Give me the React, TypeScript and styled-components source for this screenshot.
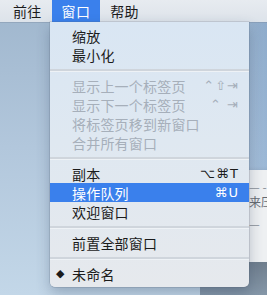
import React from 'react';
import styled, { createGlobalStyle } from 'styled-components';

const GlobalStyle = createGlobalStyle`
  html, body {
    margin: 0;
    padding: 0;
    width: 267px;
    height: 295px;
    overflow: hidden;
  }
  body {
    font-family: "Noto Sans CJK SC", "Noto Sans", sans-serif;
  }
`;

type Item =
  | { kind: 'sep' }
  | { kind: 'item'; label: string; shortcut?: string; disabled?: boolean; active?: boolean; mark?: boolean };

const items: Item[] = [
  { kind: 'item', label: '缩放' },
  { kind: 'item', label: '最小化' },
  { kind: 'sep' },
  { kind: 'item', label: '显示上一个标签页', shortcut: '⌃⇧⇥', disabled: true },
  { kind: 'item', label: '显示下一个标签页', shortcut: '⌃ ⇥', disabled: true },
  { kind: 'item', label: '将标签页移到新窗口', disabled: true },
  { kind: 'item', label: '合并所有窗口', disabled: true },
  { kind: 'sep' },
  { kind: 'item', label: '副本', shortcut: '⌥⌘T' },
  { kind: 'item', label: '操作队列', shortcut: '⌘U', active: true },
  { kind: 'item', label: '欢迎窗口' },
  { kind: 'sep' },
  { kind: 'item', label: '前置全部窗口' },
  { kind: 'sep' },
  { kind: 'item', label: '未命名', mark: true },
];

const App: React.FC = () => {
  return (
    <Desktop>
      <GlobalStyle />
      <MenuBar>
        <BarItem>前往</BarItem>
        <BarItem $open>窗口</BarItem>
        <BarItem>帮助</BarItem>
      </MenuBar>

      <BackWindow>
        <WinLine $dash>— -</WinLine>
        <WinLine $top={3}>来压</WinLine>
        <WinLine $dash $top={10}>—</WinLine>
      </BackWindow>
      <WindowShade />

      <Dropdown>
        {items.map((it, i) =>
          it.kind === 'sep' ? (
            <Separator key={i} />
          ) : (
            <Row key={i} $disabled={it.disabled} $active={it.active}>
              <Mark>{it.mark ? '◆' : ''}</Mark>
              <Label>{it.label}</Label>
              {it.shortcut && <Shortcut>{it.shortcut}</Shortcut>}
            </Row>
          )
        )}
      </Dropdown>
    </Desktop>
  );
};

const Desktop = styled.div`
  position: relative;
  width: 267px;
  height: 295px;
  overflow: hidden;
  background:
    linear-gradient(90deg, rgba(255,255,255,0) 0%, rgba(255,255,255,0) 85%, rgba(80,130,190,0.25) 100%),
    linear-gradient(180deg, #9fb6cd 0%, #b2c7dc 50%, #c3d7e8 100%);
`;

const MenuBar = styled.div`
  display: flex;
  align-items: stretch;
  height: 22px;
  padding-left: 3px;
  background: linear-gradient(180deg, #e7ebf0 0%, #dde3ea 100%);
  box-shadow: 0 1px 0 rgba(120, 135, 155, 0.35);
  position: relative;
  z-index: 2;
`;

const BarItem = styled.div<{ $open?: boolean }>`
  display: flex;
  align-items: center;
  padding: 0 10px;
  font-size: 14px;
  letter-spacing: 0.3px;
  color: ${p => (p.$open ? '#ffffff' : '#1b1b1b')};
  background: ${p => (p.$open ? '#3a80ec' : 'transparent')};
`;

const BackWindow = styled.div`
  position: absolute;
  left: 200px;
  top: 170px;
  width: 90px;
  height: 92px;
  padding-top: 11px;
  box-sizing: border-box;
  background: #eef0f2;
  box-shadow: 0 2px 6px rgba(0, 0, 0, 0.2);
  display: flex;
  flex-direction: column;
  align-items: flex-end;
  font-size: 12px;
  line-height: 12px;
`;

const WinLine = styled.span<{ $dash?: boolean; $top?: number }>`
  width: 41px;
  white-space: nowrap;
  color: ${p => (p.$dash ? '#8a8f96' : '#666b72')};
  margin-top: ${p => p.$top ?? 0}px;
`;

const WindowShade = styled.div`
  position: absolute;
  left: 200px;
  top: 262px;
  width: 90px;
  height: 33px;
  background: linear-gradient(180deg, #6f7e8d 0%, #8597a8 100%);
`;

const Dropdown = styled.div`
  position: absolute;
  left: 50px;
  top: 22px;
  width: 199px;
  padding: 4px 0;
  box-sizing: border-box;
  background: linear-gradient(180deg, #d9e6f3 0%, #dfe8f1 45%, #e6e9ed 100%);
  border-radius: 0 0 5px 5px;
  box-shadow: 0 6px 14px rgba(40, 60, 90, 0.3), 0 0 0 0.5px rgba(90, 100, 115, 0.35);
  z-index: 3;
`;

const Row = styled.div<{ $disabled?: boolean; $active?: boolean }>`
  display: flex;
  align-items: center;
  height: 19px;
  padding: 0 10px 0 5px;
  font-size: 14px;
  color: ${p => (p.$active ? '#ffffff' : p.$disabled ? '#a6afba' : '#1b1b1b')};
  background: ${p => (p.$active ? '#3a80ec' : 'transparent')};
`;

const Mark = styled.span`
  width: 17px;
  font-size: 11px;
  font-family: "DejaVu Sans", sans-serif;
  padding-left: 1px;
  box-sizing: border-box;
`;

const Label = styled.span`
  flex: 1;
  white-space: nowrap;
  letter-spacing: 0.2px;
`;

const Shortcut = styled.span`
  font-family: "DejaVu Sans", "Liberation Sans", sans-serif;
  font-size: 13px;
  letter-spacing: 1px;
  white-space: pre;
`;

const Separator = styled.div`
  height: 12px;
  display: flex;
  align-items: center;
  &::before {
    content: '';
    flex: 1;
    height: 2px;
    background: #cfd5dc;
    border-bottom: 1px solid #eef2f6;
  }
`;

export default App;
